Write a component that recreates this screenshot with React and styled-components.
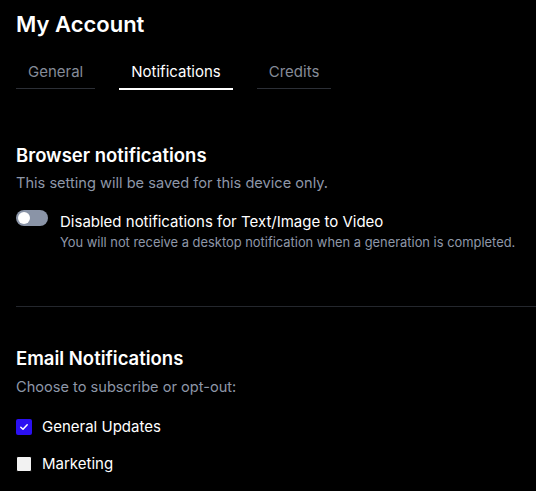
import styled, { createGlobalStyle } from "styled-components";

const GlobalStyle = createGlobalStyle`
  body {
    margin: 0;
    background: #000;
    font-family: Inter, "Noto Sans", sans-serif;
    color: #fff;
  }
`;

const Page = styled.div`
  padding: 10px 0 0 16px;
  width: 520px;
  height: 481px;
  overflow: hidden;
`;

const Title = styled.h1`
  margin: 0;
  font-size: 22px;
  line-height: 28px;
  font-weight: 600;
`;

const Tabs = styled.div`
  display: flex;
  gap: 24px;
  margin-top: 24px;
`;

const Tab = styled.div`
  padding: 0 12px 6px;
  font-size: 15px;
  line-height: 20px;
  color: ${(p) => (p.$active ? "#fff" : "#858b98")};
  border-bottom: ${(p) => (p.$active ? "2px solid #fff" : "1px solid #2c2f36")};
  margin-bottom: ${(p) => (p.$active ? "0" : "1px")};
`;

const Section = styled.section`
  padding: ${(p) => p.$pad};
`;

const Heading = styled.h2`
  margin: 0;
  font-size: 18.5px;
  line-height: 26px;
  font-weight: 600;
`;

const Muted = styled.p`
  margin: ${(p) => p.$gap || "5px"} 0 0;
  font-size: 14.6px;
  line-height: 20px;
  color: #8e97a8;
`;

const ToggleRow = styled.div`
  display: flex;
  gap: 12px;
  margin-top: 17px;
`;

const Toggle = styled.div`
  flex: none;
  width: 32px;
  height: 16px;
  border-radius: 8px;
  background: #8a94a7;
  display: flex;
  align-items: center;
  padding: 0 2px;
  box-sizing: border-box;
`;

const Knob = styled.div`
  width: 12px;
  height: 12px;
  border-radius: 50%;
  background: #fff;
`;

const ToggleText = styled.div`
  display: flex;
  flex-direction: column;
`;

const Label = styled.div`
  font-size: 15px;
  line-height: 24px;
`;

const Hint = styled.div`
  font-size: 12.9px;
  line-height: 18px;
  color: #8e97a8;
`;

const Divider = styled.hr`
  margin: 0;
  border: 0;
  border-top: 1px solid #24272d;
`;

const Checks = styled.div`
  display: flex;
  flex-direction: column;
  gap: 17px;
  margin-top: 20px;
`;

const CheckRow = styled.label`
  display: flex;
  align-items: center;
  gap: 10px;
  font-size: 15px;
  line-height: 20px;
`;

const Box = styled.span`
  width: 16px;
  height: 16px;
  border-radius: 2px;
  box-sizing: border-box;
  display: flex;
  align-items: center;
  justify-content: center;
  background: ${(p) => (p.$checked ? "#2b10f2" : "#f2f2f2")};
  border: ${(p) => (p.$checked ? "none" : "1px solid #000")};
`;

const Check = () => (
  <svg width="10" height="10" viewBox="0 0 10 10" fill="none">
    <path d="M1.8 5.2 L4 7.2 L8.2 2.8" stroke="#fff" strokeWidth="1.5" strokeLinecap="round" strokeLinejoin="round" />
  </svg>
);

export default function App() {
  return (
    <>
      <GlobalStyle />
      <Page>
        <Title>My Account</Title>
        <Tabs>
          <Tab>General</Tab>
          <Tab $active>Notifications</Tab>
          <Tab>Credits</Tab>
        </Tabs>
        <Section $pad="52px 0 54px">
          <Heading>Browser notifications</Heading>
          <Muted>This setting will be saved for this device only.</Muted>
          <ToggleRow>
            <Toggle>
              <Knob />
            </Toggle>
            <ToggleText>
              <Label>Disabled notifications for Text/Image to Video</Label>
              <Hint>You will not receive a desktop notification when a generation is completed.</Hint>
            </ToggleText>
          </ToggleRow>
        </Section>
        <Divider />
        <Section $pad="38px 0 0">
          <Heading>Email Notifications</Heading>
          <Muted $gap="6px">Choose to subscribe or opt-out:</Muted>
          <Checks>
            <CheckRow>
              <Box $checked>
                <Check />
              </Box>
              General Updates
            </CheckRow>
            <CheckRow>
              <Box />
              Marketing
            </CheckRow>
          </Checks>
        </Section>
      </Page>
    </>
  );
}
